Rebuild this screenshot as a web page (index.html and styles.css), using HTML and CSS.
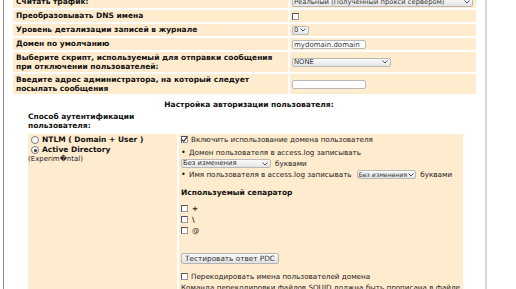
FILE: index.html
```html
<!DOCTYPE html>
<html lang="ru">
<head>
    <meta charset="UTF-8">
    <title>Настройки</title>
    <link rel="stylesheet" href="styles.css">
</head>
<body>
    <div class="frame">
        <div class="settings">
            <div class="lbl first">Считать трафик:</div>
            <div class="val first">
                <span class="sel wide">Реальный (Полученный прокси сервером)<svg class="chev" width="6" height="4" viewBox="0 0 6 4"><path d="M0.5 0.5 L3 3 L5.5 0.5" fill="none" stroke="#555" stroke-width="1"/></svg></span>
            </div>

            <div class="lbl">Преобразовывать DNS имена</div>
            <div class="val"><span class="cb"></span></div>

            <div class="lbl">Уровень детализации записей в журнале</div>
            <div class="val">
                <span class="sel">0<svg class="chev" width="6" height="4" viewBox="0 0 6 4"><path d="M0.5 0.5 L3 3 L5.5 0.5" fill="none" stroke="#555" stroke-width="1"/></svg></span>
            </div>

            <div class="lbl">Домен по умолчанию</div>
            <div class="val"><span class="txt">mydomain.domain</span></div>

            <div class="lbl">Выберите скрипт, используемый для отправки сообщения<br>при отключении пользователей:</div>
            <div class="val">
                <span class="sel none">NONE<svg class="chev" width="6" height="4" viewBox="0 0 6 4"><path d="M0.5 0.5 L3 3 L5.5 0.5" fill="none" stroke="#555" stroke-width="1"/></svg></span>
            </div>

            <div class="lbl">Введите адрес администратора, на который следует<br>посылать сообщения</div>
            <div class="val"><span class="txt"></span></div>
        </div>

        <h2>Настройка авторизации пользователя:</h2>

        <div class="auth">
            <div class="auth-title">Способ аутентификации пользователя:</div>
            <div></div>

            <div class="cell methods">
                <div class="radio-row"><span class="rb"></span>NTLM ( Domain + User )</div>
                <div class="radio-row"><span class="rb on"></span>Active Directory</div>
                <div class="note">(Experim�ntal)</div>
            </div>

            <div class="cell opts">
                <div class="line"><span class="cb"><svg width="7" height="7" viewBox="0 0 7 7"><path d="M1 3.5 L2.8 5.3 L6 1.2" fill="none" stroke="#333" stroke-width="1.2"/></svg></span>Включить использование домена пользователя</div>
                <div class="line bullet"><span class="dot">•</span>Домен пользователя в access.log записывать</div>
                <div class="line">
                    <span class="sel case">Без изменения<svg class="chev" width="6" height="4" viewBox="0 0 6 4"><path d="M0.5 0.5 L3 3 L5.5 0.5" fill="none" stroke="#555" stroke-width="1"/></svg></span>
                    <span class="after">буквами</span>
                </div>
                <div class="line"><span class="dot">•</span>Имя пользователя в access.log записывать
                    <span class="sel user">Без изменения<svg class="chev" width="6" height="4" viewBox="0 0 6 4"><path d="M0.5 0.5 L3 3 L5.5 0.5" fill="none" stroke="#555" stroke-width="1"/></svg></span>
                    <span class="after">буквами</span>
                </div>

                <div class="sep-title">Используемый сепаратор</div>
                <div class="sep"><span class="cb"></span><b>+</b></div>
                <div class="sep"><span class="cb"></span><b>\</b></div>
                <div class="sep"><span class="cb"></span>@</div>

                <button class="btn">Тестировать ответ PDC</button>

                <div class="line"><span class="cb"></span>Перекодировать имена пользователей домена</div>
                <div class="line">Команда перекодировки файлов SQUID должна быть прописана в файле</div>
            </div>
        </div>
    </div>
</body>
</html>
```

FILE: styles.css
```css
body {
    margin: 0;
    font-family: "DejaVu Sans", sans-serif;
    font-size: 7.5px;
    line-height: 9px;
    color: #111;
    background: #fff;
    overflow: hidden;
}

.frame {
    margin-left: 3px;
    width: 484px;
    height: 300px;
    border-left: 1px solid #8c8c8c;
    border-right: 2px solid #d6d6d6;
    padding-left: 9px;
    box-sizing: border-box;
}

.settings {
    display: grid;
    grid-template-columns: 275px 186px;
    gap: 2px;
    width: 463px;
    margin-top: -4px;
}
.lbl, .val {
    background: #ffebcd;
    padding: 1px 3px;
    min-height: 10px;
    display: flex;
    align-items: center;
}
.lbl {
    display: block;
    font-weight: bold;
    white-space: nowrap;
    padding-right: 0;
}
.val {
    padding-left: 2px;
}
.first {
    height: 10px;
}

.sel {
    display: inline-flex;
    align-items: center;
    justify-content: space-between;
    gap: 2px;
    height: 9px;
    padding: 0 2px 0 1px;
    border: 1px solid #b9b9b9;
    border-radius: 2px;
    background: linear-gradient(#fbfbfb, #e4e4e4);
    font-size: 6.8px;
    line-height: 9px;
    font-weight: normal;
    color: #333;
    box-sizing: border-box;
    vertical-align: middle;
    white-space: nowrap;
}
.sel.wide { width: 182px; height: 10px; }
.sel.none { width: 99px; }
.sel.case { width: 90px; }
.sel.user { font-size: 6.2px; gap: 1px; padding-right: 1px; margin-left: 2px; }
.chev {
    flex: none;
}
.txt {
    display: inline-block;
    width: 74px;
    height: 9px;
    border: 1px solid #b9b9b9;
    border-radius: 2px;
    background: #fff;
    font-size: 7px;
    line-height: 8px;
    padding-left: 1px;
    box-sizing: border-box;
    color: #333;
}

.cb {
    display: inline-flex;
    width: 7px;
    height: 7px;
    border: 1px solid #999;
    border-top-color: #555;
    border-left-color: #555;
    background: #fff;
    box-sizing: border-box;
    vertical-align: middle;
    align-items: center;
    justify-content: center;
    flex: none;
}
.cb svg {
    flex: none;
}

h2 {
    font-size: 7.5px;
    text-align: center;
    margin: 6px 0 0;
    line-height: 9px;
}

.auth {
    display: grid;
    grid-template-columns: 149px 284px;
    gap: 0 2px;
    margin-left: 15px;
}
.auth-title {
    font-weight: bold;
    padding: 3px 0 4px;
    line-height: 9px;
}
.cell {
    background: #ffebcd;
    min-height: 170px;
}
.methods {
    padding: 1px 0 0 3px;
}
.radio-row {
    display: flex;
    align-items: center;
    gap: 3px;
    font-weight: bold;
    line-height: 10px;
}
.rb {
    width: 6px;
    height: 6px;
    border: 1px solid #777;
    border-radius: 50%;
    background: #fff;
    display: inline-flex;
    align-items: center;
    justify-content: center;
}
.rb.on::after {
    content: "";
    width: 3px;
    height: 3px;
    border-radius: 50%;
    background: #333;
}
.note {
    font-size: 7px;
    color: #222;
    margin-left: -3px;
}

.opts {
    padding: 0 0 0 2px;
    font-size: 7.2px;
    color: #222;
}
.line {
    display: flex;
    align-items: center;
    gap: 3px;
    line-height: 11px;
    white-space: nowrap;
}
.line.bullet {
    margin-top: 2px;
}
.dot {
    width: 5px;
    font-size: 8px;
}
.after {
    margin-left: 1px;
}
.sep-title {
    font-weight: bold;
    font-size: 7.5px;
    color: #111;
    margin: 8px 0 6px;
}
.sep {
    display: flex;
    align-items: center;
    gap: 4px;
    line-height: 11px;
}
.btn {
    display: block;
    width: 98px;
    margin: 17px 0 7px;
    height: 11px;
    padding: 0;
    border: 1px solid #b4b4b4;
    border-radius: 2px;
    background: linear-gradient(#fafafa, #e2e2e2);
    font-family: "DejaVu Sans", sans-serif;
    font-size: 7.3px;
    line-height: 9px;
    color: #333;
}
```
